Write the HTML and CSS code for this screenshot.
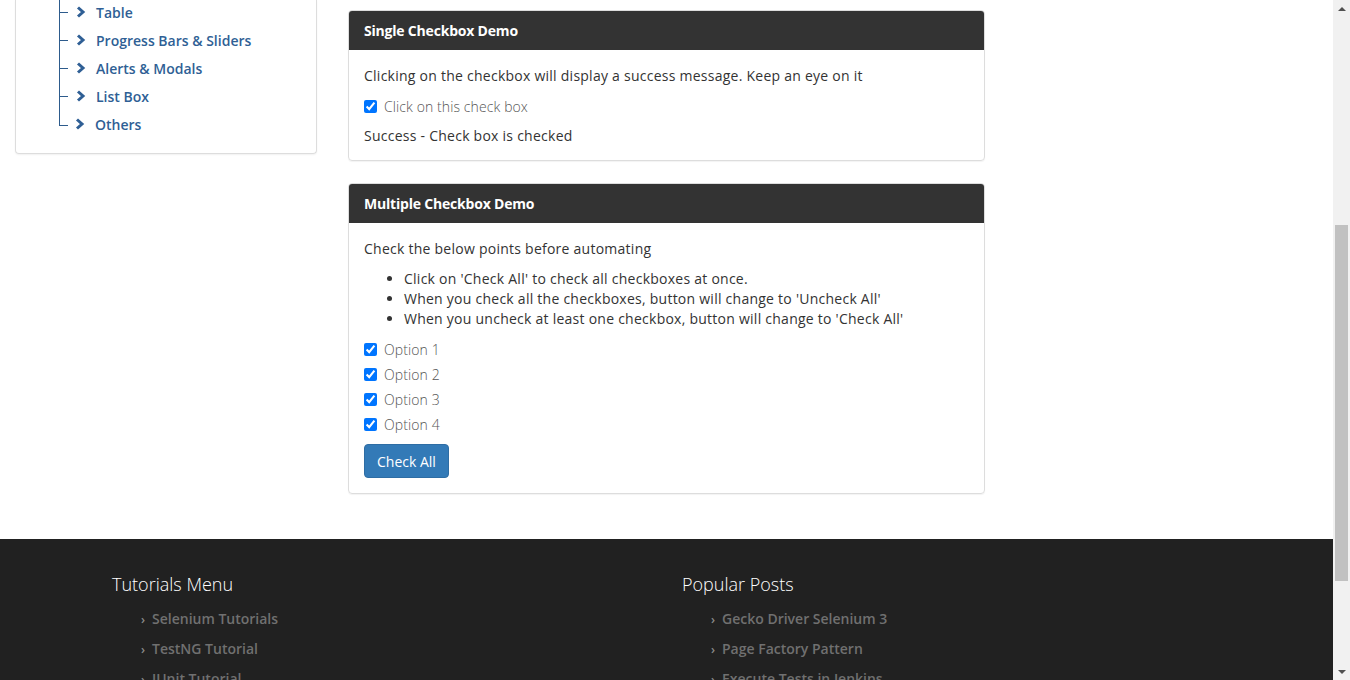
FILE: index.html
```html
<!DOCTYPE html>
<html lang="en">
<head>
<meta charset="utf-8">
<title>Checkbox Demo</title>
<link rel="stylesheet" href="styles.css">
</head>
<body>
<div class="viewport">
  <div class="page">
    <div class="top">
      <aside class="side-panel">
        <ul class="tree">
          <li><span class="chev"><svg viewBox="0 0 10 12" width="10" height="12"><path d="M2 1.5 L7 6 L2 10.5" fill="none" stroke="currentColor" stroke-width="3"/></svg></span><a>Table</a></li>
          <li><span class="chev"><svg viewBox="0 0 10 12" width="10" height="12"><path d="M2 1.5 L7 6 L2 10.5" fill="none" stroke="currentColor" stroke-width="3"/></svg></span><a>Progress Bars &amp; Sliders</a></li>
          <li><span class="chev"><svg viewBox="0 0 10 12" width="10" height="12"><path d="M2 1.5 L7 6 L2 10.5" fill="none" stroke="currentColor" stroke-width="3"/></svg></span><a>Alerts &amp; Modals</a></li>
          <li><span class="chev"><svg viewBox="0 0 10 12" width="10" height="12"><path d="M2 1.5 L7 6 L2 10.5" fill="none" stroke="currentColor" stroke-width="3"/></svg></span><a>List Box</a></li>
          <li class="last"><span class="chev"><svg viewBox="0 0 10 12" width="10" height="12"><path d="M2 1.5 L7 6 L2 10.5" fill="none" stroke="currentColor" stroke-width="3"/></svg></span><a>Others</a></li>
        </ul>
      </aside>
      <main class="main-col">
        <section class="panel">
          <div class="panel-heading">Single Checkbox Demo</div>
          <div class="panel-body">
            <p class="para">Clicking on the checkbox will display a success message. Keep an eye on it</p>
            <label class="check"><input type="checkbox" checked> Click on this check box</label>
            <p class="para success">Success - Check box is checked</p>
          </div>
        </section>
        <section class="panel panel-second">
          <div class="panel-heading">Multiple Checkbox Demo</div>
          <div class="panel-body body-second">
            <p class="para">Check the below points before automating</p>
            <ul class="points">
              <li>Click on 'Check All' to check all checkboxes at once.</li>
              <li>When you check all the checkboxes, button will change to 'Uncheck All'</li>
              <li>When you uncheck at least one checkbox, button will change to 'Check All'</li>
            </ul>
            <div class="options">
              <label class="check opt"><input type="checkbox" checked> Option 1</label>
              <label class="check opt"><input type="checkbox" checked> Option 2</label>
              <label class="check opt"><input type="checkbox" checked> Option 3</label>
              <label class="check opt"><input type="checkbox" checked> Option 4</label>
            </div>
            <button class="btn" type="button">Check All</button>
          </div>
        </section>
      </main>
    </div>
    <footer class="footer">
      <div class="foot-col">
        <h3 class="foot-title">Tutorials Menu</h3>
        <ul class="foot-list">
          <li><span class="fchev">›</span>Selenium Tutorials</li>
          <li><span class="fchev">›</span>TestNG Tutorial</li>
          <li><span class="fchev">›</span>JUnit Tutorial</li>
        </ul>
      </div>
      <div class="foot-col">
        <h3 class="foot-title">Popular Posts</h3>
        <ul class="foot-list">
          <li><span class="fchev">›</span>Gecko Driver Selenium 3</li>
          <li><span class="fchev">›</span>Page Factory Pattern</li>
          <li><span class="fchev">›</span>Execute Tests in Jenkins</li>
        </ul>
      </div>
    </footer>
  </div>
  <div class="scrollbar">
    <div class="arrow up"></div>
    <div class="track"><div class="thumb"></div></div>
    <div class="arrow down"></div>
  </div>
</div>
</body>
</html>
```
FILE: styles.css
```css
* { box-sizing: border-box; }
html, body { margin: 0; padding: 0; }
body {
  font-family: "Open Sans", Lato, sans-serif;
  font-size: 14px;
  color: #333;
  background: #fff;
  overflow: hidden;
}
.viewport {
  display: flex;
  width: 1350px;
  height: 680px;
  overflow: hidden;
}
.page {
  width: 1333px;
  height: 680px;
  overflow: hidden;
  display: flex;
  flex-direction: column;
}
.top {
  display: flex;
  align-items: flex-start;
  padding-left: 15px;
  gap: 31px;
  height: 539px;
  flex-shrink: 0;
}
.side-panel {
  width: 302px;
  border: 1px solid #ddd;
  border-top: none;
  border-radius: 0 0 4px 4px;
  box-shadow: 0 1px 2px rgba(0,0,0,0.06);
  padding: 0 0 15px 43px;
}
.tree {
  list-style: none;
  margin: -2px 0 0 0;
  padding: 0;
}
.tree li {
  position: relative;
  height: 28px;
  display: flex;
  align-items: center;
  padding-left: 16px;
  border-left: 1px solid #2d5b8c;
  color: #2f5f95;
}
.tree li::before {
  content: "";
  position: absolute;
  left: 0;
  top: 14px;
  width: 8px;
  border-top: 1px solid #2d5b8c;
}
.tree li.last { border-left: none; }
.tree li.last::before {
  top: 0;
  height: 15px;
  border-left: 1px solid #2d5b8c;
  border-bottom: 1px solid #2d5b8c;
  border-top: none;
}
.chev {
  display: inline-flex;
  width: 10px;
  margin-right: 10px;
  color: #2f5f95;
}
.tree a {
  font-weight: 600;
  font-size: 14px;
  color: #2f5f95;
}
.main-col {
  width: 637px;
  padding-top: 10px;
  display: flex;
  flex-direction: column;
  gap: 22px;
}
.panel {
  border: 1px solid #ddd;
  border-radius: 4px;
  box-shadow: 0 1px 1px rgba(0,0,0,0.05);
  overflow: hidden;
}
.panel-heading {
  background: #333;
  color: #fff;
  font-weight: 700;
  height: 39px;
  padding: 0 15px;
  display: flex;
  align-items: center;
  font-size: 14px;
  letter-spacing: -0.2px;
}
.panel-body {
  padding: 16px 15px 14px;
}
.body-second {
  padding-bottom: 15px;
}
.para {
  margin: 0 0 10px;
  line-height: 20px;
  font-weight: 500;
  letter-spacing: 0.25px;
}
.para.success { margin-bottom: 0; }
.check {
  display: flex;
  align-items: center;
  height: 20px;
  margin-bottom: 10px;
  color: #555;
  font-weight: 300;
  font-size: 14px;
  letter-spacing: 0.1px;
}
.check input {
  margin: 0 7px 0 0;
  width: 13px;
  height: 13px;
}
.points {
  margin: 10px 0 8px;
  padding-left: 40px;
  line-height: 20px;
  font-weight: 500;
  letter-spacing: 0.25px;
}
.options { display: flex; flex-direction: column; }
.opt { height: 25px; margin: 0; }
.btn {
  margin-top: 7px;
  height: 34px;
  padding: 0 12px;
  background: #337ab7;
  border: 1px solid #2e6da4;
  border-radius: 4px;
  color: #fff;
  font-family: "Open Sans", Lato, sans-serif;
  font-size: 14px;
  font-weight: 400;
}
.footer {
  background: #212121;
  flex: 1;
  display: flex;
  padding: 33px 0 0 112px;
}
.foot-col { width: 570px; }
.foot-title {
  margin: 0;
  color: #fff;
  font-weight: 300;
  font-size: 18px;
  line-height: 24px;
}
.foot-list {
  list-style: none;
  margin: 8px 0 0;
  padding-left: 29px;
}
.foot-list li {
  height: 30px;
  line-height: 30px;
  color: #707070;
  font-weight: 600;
  font-size: 14px;
}
.fchev {
  display: inline-block;
  width: 11px;
  font-size: 12px;
  color: #8a8a8a;
}
.scrollbar {
  width: 17px;
  height: 680px;
  background: #f1f1f1;
  display: flex;
  flex-direction: column;
}
.arrow {
  height: 17px;
  display: flex;
  align-items: center;
  justify-content: center;
}
.arrow::after {
  content: "";
  border-left: 4px solid transparent;
  border-right: 4px solid transparent;
}
.arrow.up::after { border-bottom: 4px solid #505050; }
.arrow.down::after { border-top: 4px solid #505050; }
.track { flex: 1; padding: 208px 2px 0; }
.thumb {
  height: 356px;
  background: #c1c1c1;
}
```
